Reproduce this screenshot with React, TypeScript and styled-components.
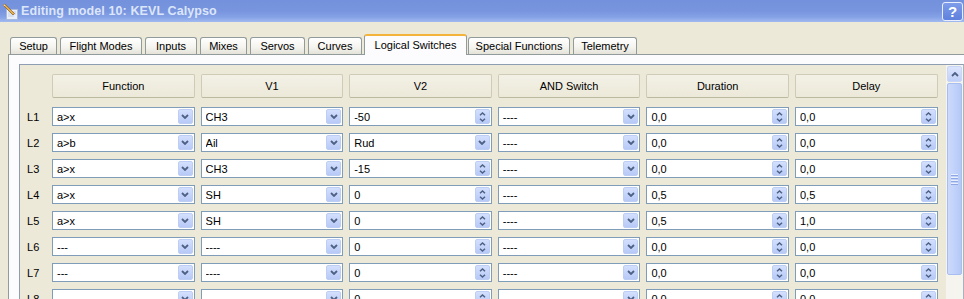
import React from "react"
import styled, { createGlobalStyle } from "styled-components"

const GlobalStyle = createGlobalStyle`
    html, body {
        margin: 0;
        padding: 0;
        background: #ECE9D8;
    }
    body {
        font-family: "Liberation Sans", Arial, sans-serif;
    }
`

const Window = styled.div`
    width: 964px;
    height: 299px;
    overflow: hidden;
    background: #ECE9D8;
    display: flex;
    flex-direction: column;
    font-size: 11px;
    color: #000;
`

const TitleBar = styled.div`
    height: 22px;
    flex: none;
    display: flex;
    align-items: center;
    padding: 0 1px 0 2px;
    background: linear-gradient(to bottom, #7391DC 0%, #7894DE 50%, #85A2E6 78%, #A2BAF0 100%);
`

const TitleText = styled.div`
    flex: 1;
    margin-left: 3px;
    font-weight: bold;
    font-size: 12.5px;
    color: #DCE6FA;
    letter-spacing: 0.1px;
`

const HelpButton = styled.div`
    width: 21px;
    height: 19px;
    box-sizing: border-box;
    border: 1px solid #E8EEFC;
    border-radius: 3px;
    background: linear-gradient(to bottom, #7F9CEA, #5F80DC);
    color: #fff;
    font-weight: bold;
    font-size: 15px;
    display: flex;
    align-items: center;
    justify-content: center;
`

const TabBar = styled.div`
    height: 32px;
    flex: none;
    display: flex;
    align-items: flex-end;
    padding-left: 10px;
    position: relative;
    z-index: 1;
`

const Tab = styled.div<{ $w: number; $ml: number; $active?: boolean }>`
    width: ${p => p.$w}px;
    margin-left: ${p => p.$ml}px;
    height: ${p => (p.$active ? 21 : 17)}px;
    margin-bottom: ${p => (p.$active ? -1 : 0)}px;
    box-sizing: border-box;
    flex: none;
    border: 1px solid #919B9C;
    border-bottom: none;
    border-top: ${p => (p.$active ? "2px solid #F4B43C" : "1px solid #919B9C")};
    border-radius: 3px 3px 0 0;
    background: ${p => (p.$active ? "#FCFCFE" : "linear-gradient(to bottom, #FFFFFF, #F4F3EE 60%, #E4E2D8)")};
    display: flex;
    align-items: center;
    justify-content: center;
    padding-bottom: ${p => (p.$active ? 2 : 0)}px;
    white-space: nowrap;
`

const Pane = styled.div`
    flex: 1;
    min-height: 0;
    margin-left: 8px;
    border-top: 1px solid #919B9C;
    border-left: 1px solid #919B9C;
    background: #FCFCFE;
    padding: 9px 0 0 10px;
    display: flex;
`

const ScrollArea = styled.div`
    flex: 1;
    display: flex;
    border-top: 1px solid #8E9DB2;
    border-left: 1px solid #8E9DB2;
    border-right: 1px solid #A9B1BC;
    background: #ECE9D8;
`

const Table = styled.div`
    flex: 1;
    padding-top: 9px;
    display: flex;
    flex-direction: column;
`

const Row = styled.div<{ $header?: boolean }>`
    display: grid;
    grid-template-columns: 26px repeat(6, 142.6px);
    column-gap: 6px;
    height: ${p => (p.$header ? 24 : 19)}px;
    margin-bottom: ${p => (p.$header ? 9 : 7)}px;
    flex: none;
`

const HeaderCell = styled.div`
    box-sizing: border-box;
    border: 1px solid #CFCBB6;
    border-bottom-color: #BDB8A0;
    border-radius: 2px;
    background: linear-gradient(to bottom, #F3F1E6, #ECE9D9);
    display: flex;
    align-items: center;
    justify-content: center;
`

const RowLabel = styled.div`
    padding-left: 7px;
    display: flex;
    align-items: center;
`

const Field = styled.div`
    box-sizing: border-box;
    height: 19px;
    border: 1px solid #7F9DB9;
    background: #fff;
    display: flex;
    align-items: center;
    padding: 1px 1px 1px 4px;
`

const FieldText = styled.div`
    flex: 1;
    white-space: nowrap;
    overflow: hidden;
`

const FieldButton = styled.div`
    width: 15px;
    height: 15px;
    box-sizing: border-box;
    border: 1px solid #BDCEF5;
    border-radius: 2px;
    background: linear-gradient(to bottom, #D3DFFD, #B7C9F6);
    display: flex;
    flex-direction: column;
    align-items: center;
    justify-content: center;
    gap: 2px;
`

const ScrollBar = styled.div`
    width: 17px;
    flex: none;
    box-sizing: border-box;
    padding: 1px 0 0 1px;
    background: #F5F4EF;
    display: flex;
    flex-direction: column;
    gap: 1px;
`

const ScrollButton = styled.div`
    width: 15px;
    height: 16px;
    box-sizing: border-box;
    border: 1px solid #C9D6F6;
    border-radius: 2px;
    background: linear-gradient(to bottom, #DCE5FD, #C0D0F8);
    display: flex;
    align-items: center;
    justify-content: center;
`

const ScrollThumb = styled.div`
    width: 15px;
    height: 192px;
    box-sizing: border-box;
    border: 1px solid #A8BDF0;
    border-radius: 2px;
    background: linear-gradient(to right, #CCDAFC, #C1D2FA 50%, #B5C8F6);
    display: flex;
    flex-direction: column;
    align-items: center;
    justify-content: center;
    gap: 1px;
`

const Grip = styled.div`
    width: 7px;
    height: 1px;
    background: #E9EFFD;
    border-bottom: 1px solid #8FA8E3;
`

const ChevronDown = () => (
    <svg width="8" height="5" viewBox="0 0 8 5">
        <path d="M1 1 L4 4 L7 1" fill="none" stroke="#4D6185" strokeWidth="1.8" />
    </svg>
)

const SpinArrows = () => (
    <>
        <svg width="7" height="4" viewBox="0 0 7 4">
            <path d="M1 3.3 L3.5 1 L6 3.3" fill="none" stroke="#4D6185" strokeWidth="1.5" />
        </svg>
        <svg width="7" height="4" viewBox="0 0 7 4">
            <path d="M1 0.7 L3.5 3 L6 0.7" fill="none" stroke="#4D6185" strokeWidth="1.5" />
        </svg>
    </>
)

const TitleIcon = () => (
    <svg width="16" height="17" viewBox="0 0 16 17">
        <rect x="4.5" y="6.5" width="11" height="10" fill="#EAF0FB" stroke="#A7B9DC" />
        <path d="M6 9h8M6 11h8M6 13h6" stroke="#C2CFE8" />
        <path d="M1 2 L3 1.2 L12.5 10.5 L11 12 Z" fill="#E7B24E" stroke="#8E5A17" strokeWidth="0.7" />
        <path d="M1 2 L2.5 1.5 L3 3 Z" fill="#FFFFFF" />
    </svg>
)

type Cell = { text: string; kind: "combo" | "spin" }
const c = (text: string): Cell => ({ text, kind: "combo" })
const s = (text: string): Cell => ({ text, kind: "spin" })

const tabs = [
    { name: "Setup", left: 10, right: 57 },
    { name: "Flight Modes", left: 60, right: 142 },
    { name: "Inputs", left: 145, right: 197 },
    { name: "Mixes", left: 200, right: 247 },
    { name: "Servos", left: 250, right: 305 },
    { name: "Curves", left: 308, right: 362 },
    { name: "Logical Switches", left: 364, right: 467, active: true },
    { name: "Special Functions", left: 468, right: 570 },
    { name: "Telemetry", left: 573, right: 637 },
]

const headers = ["Function", "V1", "V2", "AND Switch", "Duration", "Delay"]

const rows: Cell[][] = [
    [c("a>x"), c("CH3"), s("-50"), c("----"), s("0,0"), s("0,0")],
    [c("a>b"), c("Ail"), c("Rud"), c("----"), s("0,0"), s("0,0")],
    [c("a>x"), c("CH3"), s("-15"), c("----"), s("0,0"), s("0,0")],
    [c("a>x"), c("SH"), s("0"), c("----"), s("0,5"), s("0,5")],
    [c("a>x"), c("SH"), s("0"), c("----"), s("0,5"), s("1,0")],
    [c("---"), c("----"), s("0"), c("----"), s("0,0"), s("0,0")],
    [c("---"), c("----"), s("0"), c("----"), s("0,0"), s("0,0")],
    [c("---"), c("----"), s("0"), c("----"), s("0,0"), s("0,0")],
]

const App = () => {
    return (
        <Window>
            <GlobalStyle />
            <TitleBar>
                <TitleIcon />
                <TitleText>Editing model 10: KEVL Calypso</TitleText>
                <HelpButton>?</HelpButton>
            </TitleBar>
            <TabBar>
                {tabs.map((t, i) => (
                    <Tab
                        key={t.name}
                        $w={t.right - t.left}
                        $ml={i === 0 ? 0 : t.left - tabs[i - 1].right}
                        $active={t.active}
                    >
                        {t.name}
                    </Tab>
                ))}
            </TabBar>
            <Pane>
                <ScrollArea>
                    <Table>
                        <Row $header>
                            <div />
                            {headers.map(h => (
                                <HeaderCell key={h}>{h}</HeaderCell>
                            ))}
                        </Row>
                        {rows.map((r, i) => (
                            <Row key={i}>
                                <RowLabel>L{i + 1}</RowLabel>
                                {r.map((cell, j) => (
                                    <Field key={j}>
                                        <FieldText>{cell.text}</FieldText>
                                        <FieldButton>
                                            {cell.kind === "combo" ? <ChevronDown /> : <SpinArrows />}
                                        </FieldButton>
                                    </Field>
                                ))}
                            </Row>
                        ))}
                    </Table>
                    <ScrollBar>
                        <ScrollButton>
                            <svg width="8" height="5" viewBox="0 0 8 5">
                                <path d="M1 4 L4 1 L7 4" fill="none" stroke="#4D6185" strokeWidth="1.8" />
                            </svg>
                        </ScrollButton>
                        <ScrollThumb>
                            <Grip />
                            <Grip />
                            <Grip />
                            <Grip />
                        </ScrollThumb>
                    </ScrollBar>
                </ScrollArea>
            </Pane>
        </Window>
    )
}

export default App
